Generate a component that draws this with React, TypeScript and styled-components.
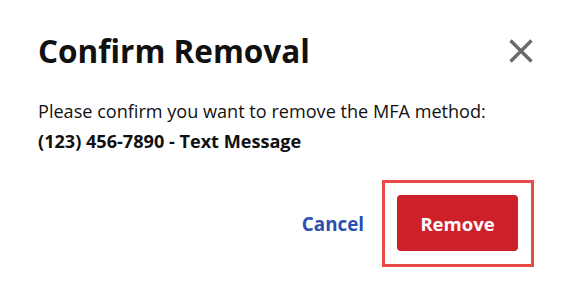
import React from "react";
import styled, { createGlobalStyle } from "styled-components";

const GlobalStyle = createGlobalStyle`
	html, body {
		margin: 0;
		padding: 0;
		background: #ffffff;
	}
	body {
		font-family: "Open Sans", "Noto Sans", sans-serif;
		color: #111111;
	}
`;

const Dialog = styled.div`
	width: 565px;
	height: 291px;
	box-sizing: border-box;
	padding: 30px 31px 0 38px;
	display: flex;
	flex-direction: column;
	background: #ffffff;
`;

const Header = styled.div`
	display: flex;
	align-items: center;
	justify-content: space-between;
`;

const Title = styled.h2`
	margin: 0;
	font-size: 31.5px;
	line-height: 42px;
	font-weight: 700;
	color: #111111;
`;

const CloseButton = styled.button`
	border: 0;
	background: none;
	padding: 0;
	width: 26px;
	height: 26px;
	display: flex;
	align-items: center;
	justify-content: center;
	cursor: pointer;
`;

const Body = styled.div`
	margin-top: 24px;
	font-size: 18.1px;
	line-height: 30px;
	color: #111111;
`;

const Method = styled.strong`
	display: block;
	font-weight: 700;
`;

const Footer = styled.div`
	margin-top: 24px;
	display: flex;
	justify-content: flex-end;
	align-items: center;
	gap: 18px;
`;

const LinkButton = styled.button`
	border: 0;
	background: none;
	padding: 0;
	font-family: inherit;
	font-size: 18.8px;
	font-weight: 700;
	color: #2c4fb0;
	cursor: pointer;
`;

const FocusRing = styled.div`
	display: flex;
	padding: 12px 13px 13px 12px;
	border: 3px solid #eb4b48;
`;

const DangerButton = styled.button`
	width: 121px;
	height: 56px;
	border: 0;
	border-radius: 4px;
	background: #cd2028;
	color: #ffffff;
	font-family: inherit;
	font-size: 18.5px;
	font-weight: 700;
	cursor: pointer;
	outline: none;
`;

const CloseIcon = () => (
	<svg width="24" height="24" viewBox="0 0 24 24" aria-hidden="true">
		<path
			d="M1.5 1.5 L22.5 22.5 M22.5 1.5 L1.5 22.5"
			stroke="#6b6b6b"
			strokeWidth="3.4"
			strokeLinecap="butt"
		/>
	</svg>
);

const App: React.FC = () => {
	return (
		<>
			<GlobalStyle />
			<Dialog role="dialog" aria-labelledby="confirm-title">
				<Header>
					<Title id="confirm-title">Confirm Removal</Title>
					<CloseButton aria-label="Close">
						<CloseIcon />
					</CloseButton>
				</Header>
				<Body>
					Please confirm you want to remove the MFA method:
					<Method>(123) 456-7890 - Text Message</Method>
				</Body>
				<Footer>
					<LinkButton>Cancel</LinkButton>
					<FocusRing>
						<DangerButton>Remove</DangerButton>
					</FocusRing>
				</Footer>
			</Dialog>
		</>
	);
};

export default App;
